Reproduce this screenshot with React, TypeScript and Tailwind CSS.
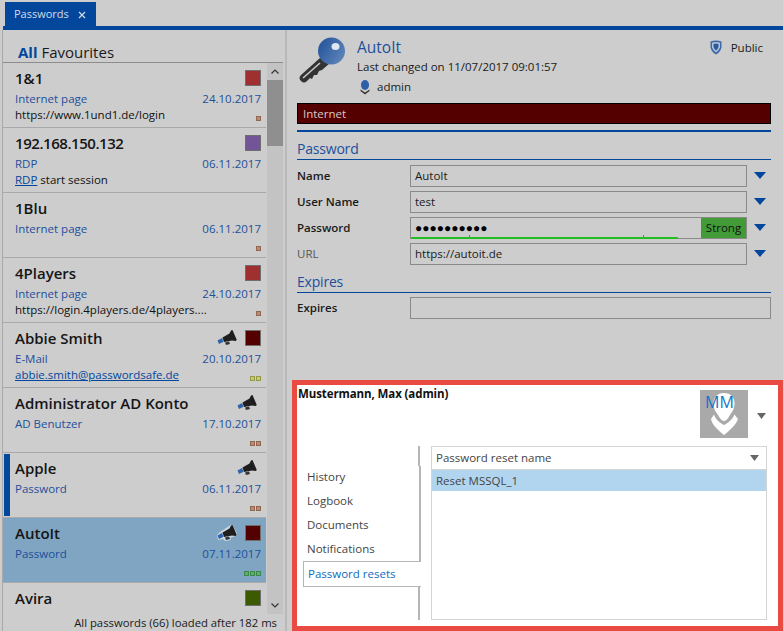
import React from "react";

const BLUE = "#03479c";

function Megaphone({ light }: { light?: boolean }) {
  return (
    <svg width="20" height="16" viewBox="0 0 20 16" className="shrink-0">
      {light && <path d="M3 7 L15 -1 L21 10 L13 13 L14 15 L8 16 L6 14 L1 15 L0 10 Z" fill="#c8d6e2" />}
      <path d="M5.5 7.5 L12.5 3.5 L14 0.5 L15.5 0 L19.8 10 L18.5 11 L15 10.5 L7 12 Z" fill="#1e1e1e" />
      <path d="M0.5 10.5 L5 8 L6.5 11.8 L2 14 Z" fill="#2f63a8" />
      <path d="M8 12.4 L12 11.6 L13 14 L9 15 Z" fill="#333" />
    </svg>
  );
}

function Tri({ className }: { className?: string }) {
  return (
    <svg width="12" height="7" viewBox="0 0 12 7" className={className}>
      <path d="M0 0 H12 L6 7 Z" fill={BLUE} />
    </svg>
  );
}

function GrayTri() {
  return (
    <svg width="9" height="6" viewBox="0 0 9 6">
      <path d="M0 0 H9 L4.5 6 Z" fill="#666" />
    </svg>
  );
}

function Key() {
  return (
    <svg width="48" height="48" viewBox="0 0 48 48">
      <defs>
        <linearGradient id="k" x1="0" y1="0" x2="1" y2="0.6">
          <stop offset="0" stopColor="#1f4f98" />
          <stop offset="1" stopColor="#5b82b8" />
        </linearGradient>
      </defs>
      <path d="M21 22 L2 39 Q-1 42 2 45 Q5 48 8 45 L11 42 L13 43 L15 39 L18 39 L20 35 L23 34 L31 27 Z" fill="#333" />
      <path d="M4 42 L21 27" stroke="#ccc" strokeWidth="1.5" fill="none" />
      <circle cx="32.5" cy="15" r="13.5" fill="url(#k)" />
      <ellipse cx="36.5" cy="10.5" rx="4" ry="3.6" fill="#dfe7f0" />
    </svg>
  );
}

function UserIcon() {
  return (
    <svg width="12" height="15" viewBox="0 0 12 15">
      <ellipse cx="6" cy="5" rx="4" ry="5" fill="#2f5fa6" />
      <path d="M1.5 9.5 L6 12.5 L10.5 9.5 L10.5 11 L6 14.5 L1.5 11 Z" fill="#333" />
    </svg>
  );
}

function Shield() {
  return (
    <svg width="12" height="15" viewBox="0 0 12 15">
      <path d="M0.5 1.5 Q6 -0.5 11.5 1.5 L11.5 7.5 Q10.5 12 6 14.5 Q1.5 12 0.5 7.5 Z" fill="#3e69a8" />
      <path d="M2 2.7 Q6 1.5 10 2.7 L10 7.3 Q9 10.8 6 12.6 Q3 10.8 2 7.3 Z" fill="#b4c5da" />
      <path d="M3.5 4 Q6 3.2 8.5 4 L8.5 7 Q7.8 9.4 6 10.6 Q4.2 9.4 3.5 7 Z" fill="#2d5a9c" />
    </svg>
  );
}

function Avatar() {
  return (
    <div className="relative w-[48px] h-[48px] bg-[#a9a9a9] shrink-0 overflow-hidden">
      <svg width="48" height="48" viewBox="0 0 48 48" className="absolute left-0 top-0">
        <path d="M24 3 C16 3 13 9 13.5 15 C14 21 18 24 19.5 27.5 Q22 31 24 31 Q26 31 28.5 27.5 C30 24 34 21 34.5 15 C35 9 32 3 24 3 Z" fill="#fff" />
        <path d="M11 29 L14 24.5 C16 30 20 33 24 35 C28 33 32 30 34.5 24.5 L38 29 C36 35 29 41 24 45 C19 41 12 35 11 29 Z" fill="#fff" />
      </svg>
      <div className="absolute left-[5px] top-[2px] text-[16px] leading-[20px] text-[#0f76c8]">MM</div>
    </div>
  );
}

type Item = {
  title: string;
  tight?: boolean;
  type: string;
  date: string;
  extra?: React.ReactNode;
  color?: string;
  mega?: boolean;
  dots?: string[];
  marked?: boolean;
  selected?: boolean;
};

const brown = "#c08a6c";
const items: Item[] = [
  { title: "1&1", type: "Internet page", date: "24.10.2017", extra: "https://www.1und1.de/login", color: "#a03030", dots: [brown] },
  { title: "192.168.150.132", tight: true, type: "RDP", date: "06.11.2017", extra: <><span className="underline text-[#03479c]">RDP</span> start session</>, color: "#735496" },
  { title: "1Blu", type: "Internet page", date: "06.11.2017", dots: [brown] },
  { title: "4Players", type: "Internet page", date: "24.10.2017", extra: "https://login.4players.de/4players....", color: "#a03030", dots: [brown] },
  { title: "Abbie Smith", type: "E-Mail", date: "20.10.2017", extra: <span className="underline text-[#03479c]">abbie.smith@passwordsafe.de</span>, color: "#550000", mega: true, dots: ["#c8cc66", "#c8cc66"] },
  { title: "Administrator AD Konto", type: "AD Benutzer", date: "17.10.2017", mega: true, dots: [brown, brown] },
  { title: "Apple", type: "Password", date: "06.11.2017", mega: true, dots: [brown, brown], marked: true },
  { title: "AutoIt", type: "Password", date: "07.11.2017", color: "#550000", mega: true, dots: ["#55b566", "#55b566", "#55b566"], selected: true },
];

function Row({ item }: { item: Item }) {
  return (
    <div className={`relative h-[65px] shrink-0 border-b border-[#a9a9a9] pl-[12px] pr-[5px] pt-[4px] ${item.selected ? "bg-[#7fa5c2]" : ""}`}>
      {item.marked && <div className="absolute left-[1px] top-[1px] bottom-[1px] w-[6px] bg-[#03479c]" />}
      <div className="flex items-center h-[22px]">
        <div className={`flex-1 text-[15px] leading-[22px] font-semibold text-[#151515] whitespace-nowrap ${item.tight ? "tracking-[-0.45px]" : ""}`}>{item.title}</div>
        {item.mega && <div className={item.color ? "mr-[8px]" : "mr-[4px]"}><Megaphone light={item.selected} /></div>}
        {item.color && <div className="w-[16px] h-[16px] border border-[#6e6e6e]" style={{ backgroundColor: item.color }} />}
      </div>
      <div className="flex justify-between text-[11.5px] leading-[16px] text-[#1d4f9c] mt-[2px]">
        <span>{item.type}</span>
        <span>{item.date}</span>
      </div>
      <div className="flex justify-between items-end h-[16px] text-[11.5px] leading-[16px] text-[#111]">
        <span className="whitespace-nowrap">{item.extra}</span>
        <div className="flex gap-[1px] mb-[2px]">
          {(item.dots ?? []).map((c, i) => (
            <div key={i} className="w-[5px] h-[5px] border border-black/25" style={{ backgroundColor: c }} />
          ))}
        </div>
      </div>
    </div>
  );
}

function Field({ label, value, dim, children }: { label: string; value?: string; dim?: boolean; children?: React.ReactNode }) {
  return (
    <div className="flex items-center h-[22px]">
      <div className={`w-[113px] text-[11.5px] ${dim ? "text-[#555]" : "font-semibold text-[#1a1a1a]"}`}>{label}</div>
      <div className="relative w-[337px] h-[22px] border border-[#8a8a8a] pl-[4px] text-[11.5px] leading-[20px] text-[#1a1a1a]">
        {value}
        {children}
      </div>
      <Tri className="ml-[7px] -mt-[2px]" />
    </div>
  );
}

function Heading({ children }: { children: React.ReactNode }) {
  return <div className="text-[14px] tracking-[-0.2px] leading-[20px] text-[#1d4f9c] border-b border-[#03479c] h-[21px]">{children}</div>;
}

export default function App() {
  return (
    <div className="w-[783px] h-[631px] bg-[#cdcdcd] overflow-hidden flex flex-col" style={{ fontFamily: '"Open Sans", "Noto Sans", sans-serif' }}>
      <div className="h-[26px] pl-[5px] pt-[2px] shrink-0">
        <div className="w-[91px] h-[24px] bg-[#03479c] flex items-center pl-[9px] text-[11px] text-[#d5dce8]">
          Passwords
          <svg width="8" height="8" viewBox="0 0 8 8" className="ml-[9px] mt-[1px]">
            <path d="M1 1 L7 7 M7 1 L1 7" stroke="#d5dce8" strokeWidth="1.2" />
          </svg>
        </div>
      </div>
      <div className="h-[4px] bg-[#03479c] ml-[3px] shrink-0" />
      <div className="flex flex-1 min-h-0">
        {/* Left panel */}
        <div className="w-[283px] ml-[2px] shrink-0 border-l border-[#a9a9a9] flex flex-col">
          <div className="h-[33px] mr-[2px] shrink-0 border-b border-[#8c8c8c] pl-[15px] pt-[12px] text-[15px] leading-[21px] text-[#1a1a1a]">
            <span className="font-bold text-[#03479c]">All</span> Favourites
          </div>
          <div className="flex h-[551px] shrink-0">
            <div className="w-[263px] shrink-0 overflow-hidden flex flex-col">
              {items.map((it) => <Row key={it.title} item={it} />)}
              <div className="pl-[12px] pr-[5px] pt-[4px] flex items-center h-[22px] box-content">
                <div className="flex-1 text-[15px] leading-[22px] font-semibold text-[#151515]">Avira</div>
                <div className="w-[16px] h-[16px] border border-[#6e6e6e] bg-[#3c5a00]" />
              </div>
            </div>
            <div className="w-[16px] ml-[1px] bg-[#c3c3c3] flex flex-col">
              <div className="h-[17px] flex items-center justify-center">
                <svg width="8" height="5" viewBox="0 0 8 5"><path d="M0.5 4.5 L4 1 L7.5 4.5" stroke="#333" strokeWidth="1.2" fill="none" /></svg>
              </div>
              <div className="h-[66px] bg-[#8f8f8f]" />
              <div className="flex-1" />
              <div className="h-[17px] flex items-center justify-center">
                <svg width="8" height="5" viewBox="0 0 8 5"><path d="M0.5 0.5 L4 4 L7.5 0.5" stroke="#333" strokeWidth="1.2" fill="none" /></svg>
              </div>
            </div>
          </div>
          <div className="h-[17px] shrink-0 pr-[8px] text-right text-[11.3px] leading-[18px] text-[#1a1a1a] whitespace-nowrap">
            All passwords (66) loaded after 182 ms
          </div>
        </div>
        {/* Right panel */}
        <div className="flex-1 min-w-0 border-l-2 border-[#b9b9b9] relative">
          <div className="pl-[10px] pr-[12px]">
            <div className="flex h-[73px]">
              <div className="mt-[6px] ml-[2px] mr-[10px]"><Key /></div>
              <div className="flex-1 pt-[7px]">
                <div className="flex justify-between h-[21px]">
                  <div className="text-[15.5px] leading-[21px] text-[#1d4f9c]">AutoIt</div>
                  <div className="flex items-center text-[11.5px] text-[#1a1a1a] mr-[8px]">
                    <div className="mr-[9px]"><Shield /></div>Public
                  </div>
                </div>
                <div className="text-[11.5px] leading-[18px] text-[#1a1a1a]">Last changed on 11/07/2017 09:01:57</div>
                <div className="flex items-center text-[11.5px] leading-[22px] text-[#1a1a1a] pl-[2px]">
                  <div className="mr-[6px] flex"><UserIcon /></div>admin
                </div>
              </div>
            </div>
            <div className="h-[21px] bg-[#550000] border border-black pl-[5px] text-[11.5px] leading-[19px] text-[#d8c8c8]">Internet</div>
            <div className="h-[2px] bg-[#03479c] mt-[6px]" />
            <div className="mt-[7px]"><Heading>Password</Heading></div>
            <div className="flex flex-col gap-[4px] mt-[5px]">
              <Field label="Name" value="AutoIt" />
              <Field label="User Name" value="test" />
              <Field label="Password">
                <div className="absolute left-[4px] top-0 text-[12px] leading-[20px] tracking-[0px] text-black">●●●●●●●●●●</div>
                <div className="absolute left-0 bottom-[-1px] w-[267px] h-[2px] bg-[#20c020]" />
                <div className="absolute left-[58px] bottom-[1px] w-[1px] h-[2px] bg-[#777]" />
                <div className="absolute left-[232px] bottom-[1px] w-[1px] h-[2px] bg-[#777]" />
                <div className="absolute right-0 top-0 bottom-0 w-[45px] bg-[#429b37] text-center text-[11.5px] leading-[20px] text-[#111]">Strong</div>
              </Field>
              <Field label="URL" value="https://autoit.de" dim />
            </div>
            <div className="mt-[7px]"><Heading>Expires</Heading></div>
            <div className="flex items-center h-[22px] mt-[4px]">
              <div className="w-[113px] text-[11.5px] font-semibold text-[#1a1a1a]">Expires</div>
              <div className="flex-1 h-[22px] border border-[#8a8a8a]" />
            </div>
          </div>
          {/* Red highlighted area */}
          <div className="absolute left-[5px] right-0 bottom-0 h-[251px] border-[5px] border-[#e94b43] bg-white flex flex-col">
            <div className="flex h-[61px] shrink-0">
              <div className="flex-1 pl-[1px] pt-[1px] text-[11.5px] tracking-[-0.1px] leading-[16px] font-bold text-[#111]">Mustermann, Max (admin)</div>
              <div className="mt-[5px] mr-[9px]"><Avatar /></div>
              <div className="mt-[28px] mr-[12px]"><GrayTri /></div>
            </div>
            <div className="flex flex-1 min-h-0 pb-[6px] pl-[6px] pr-[11px]">
              <div className="w-[118px] shrink-0 flex flex-col text-[11.5px] text-[#444]">
                <div className="h-[20px] mr-[1px] border-r-2 border-[#b5b5b5]" />
                <div className="h-[95px] border-r-2 border-[#b5b5b5] pl-[4px] flex flex-col leading-[24px] pb-[1px]">
                  <div className="-mt-[1px]">History</div>
                  <div>Logbook</div>
                  <div>Documents</div>
                  <div>Notifications</div>
                </div>
                <div className="h-[26px] border border-[#b5b5b5] border-r-0 pl-[4px] leading-[24px] text-[#0f6cbd]">Password resets</div>
                <div className="flex-1 mr-[1px] border-r-2 border-[#b5b5b5]" />
              </div>
              <div className="flex-1 ml-[10px] border border-[#d4d4d4] flex flex-col text-[11.5px] text-[#444]">
                <div className="h-[23px] border-b border-[#d4d4d4] flex items-center justify-between pl-[4px] pr-[7px]">
                  Password reset name
                  <GrayTri />
                </div>
                <div className="h-[21px] bg-[#b1d5ef] pl-[4px] leading-[21px]">Reset MSSQL_1</div>
              </div>
            </div>
          </div>
        </div>
      </div>
    </div>
  );
}
